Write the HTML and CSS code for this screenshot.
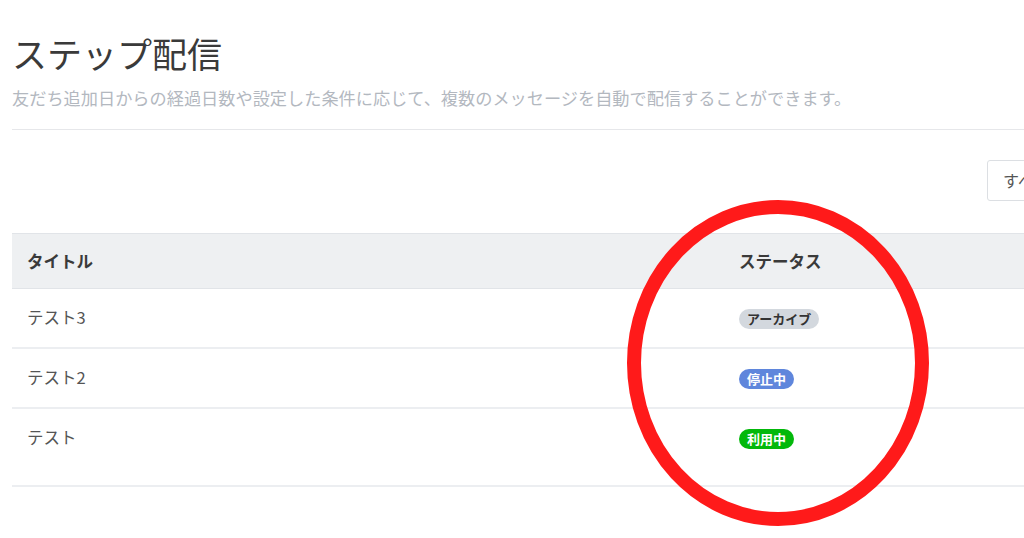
FILE: index.html
```html
<!DOCTYPE html>
<html lang="ja">
<head>
    <meta charset="utf-8">
    <meta name="viewport" content="width=device-width, initial-scale=1.0">
    <title>ステップ配信</title>
    <link rel="stylesheet" href="styles.css">
</head>
<body>
    <div class="page">
        <header class="page-head">
            <h1 class="page-title">ステップ配信</h1>
            <p class="page-desc">友だち追加日からの経過日数や設定した条件に応じて、複数のメッセージを自動で配信することができます。</p>
        </header>

        <div class="toolbar">
            <div class="select-box">すべて</div>
        </div>

        <table class="step-table">
            <thead>
                <tr>
                    <th class="col-title">タイトル</th>
                    <th class="col-status">ステータス</th>
                </tr>
            </thead>
            <tbody>
                <tr>
                    <td>テスト3</td>
                    <td><span class="badge badge-archive">アーカイブ</span></td>
                </tr>
                <tr>
                    <td>テスト2</td>
                    <td><span class="badge badge-stop">停止中</span></td>
                </tr>
                <tr class="last-row">
                    <td>テスト</td>
                    <td><span class="badge badge-active">利用中</span></td>
                </tr>
            </tbody>
        </table>
    </div>

    <!-- red mark drawn over the status column -->
    <svg class="mark" width="316" height="340" viewBox="0 0 316 340">
        <ellipse cx="158" cy="170" rx="144" ry="156" fill="none" stroke="#ff1a1a" stroke-width="14"/>
    </svg>
</body>
</html>
```

FILE: styles.css
```css
* {
    margin: 0;
    padding: 0;
    box-sizing: border-box;
}
body {
    width: 1024px;
    height: 538px;
    overflow: hidden;
    background: #fff;
    font-family: "Noto Sans CJK JP", "Noto Sans", sans-serif;
    color: #555;
    position: relative;
}
.page {
    width: 1125px;
    margin-left: 12px;
    padding-top: 32px;
}
.page-head {
    border-bottom: 1px solid #e6e7ea;
    padding-bottom: 19px;
}
.page-title {
    font-size: 35px;
    line-height: 42px;
    font-weight: 400;
    color: #3a3a3a;
}
.page-desc {
    margin-top: 12px;
    font-size: 17.2px;
    line-height: 24px;
    color: #b3b8bf;
}
.toolbar {
    display: flex;
    justify-content: flex-end;
    padding-top: 30px;
    padding-bottom: 32px;
}
.select-box {
    width: 150px;
    height: 41px;
    line-height: 39px;
    padding-left: 15px;
    border: 1px solid #dcdfe3;
    border-radius: 3px;
    font-size: 16px;
    color: #555;
}
.step-table {
    width: 100%;
    border-collapse: collapse;
}
.step-table th {
    text-align: left;
    background: #eef0f2;
    border-top: 1px solid #e1e4e8;
    border-bottom: 1px solid #e1e4e8;
    padding: 16px 15px;
    font-size: 16.5px;
    line-height: 22px;
    font-weight: 700;
    color: #3a3a3a;
}
.col-title {
    width: 712px;
}
.step-table td {
    vertical-align: top;
    padding: 16px 15px 18px;
    font-size: 16.5px;
    line-height: 24px;
    border-bottom: 2px solid #eceef1;
    color: #555;
}
.last-row td {
    padding-bottom: 36px;
}
.badge {
    display: inline-block;
    vertical-align: top;
    margin-top: 4px;
    height: 20px;
    line-height: 20px;
    padding: 0 8px;
    border-radius: 10px;
    font-size: 13px;
    font-weight: 700;
}
.badge-archive {
    background: #d3d8de;
    color: #333;
}
.badge-stop {
    background: #5f86dc;
    color: #fff;
}
.badge-active {
    background: #03b80b;
    color: #fff;
}
.mark {
    position: absolute;
    left: 620px;
    top: 193px;
}
```
